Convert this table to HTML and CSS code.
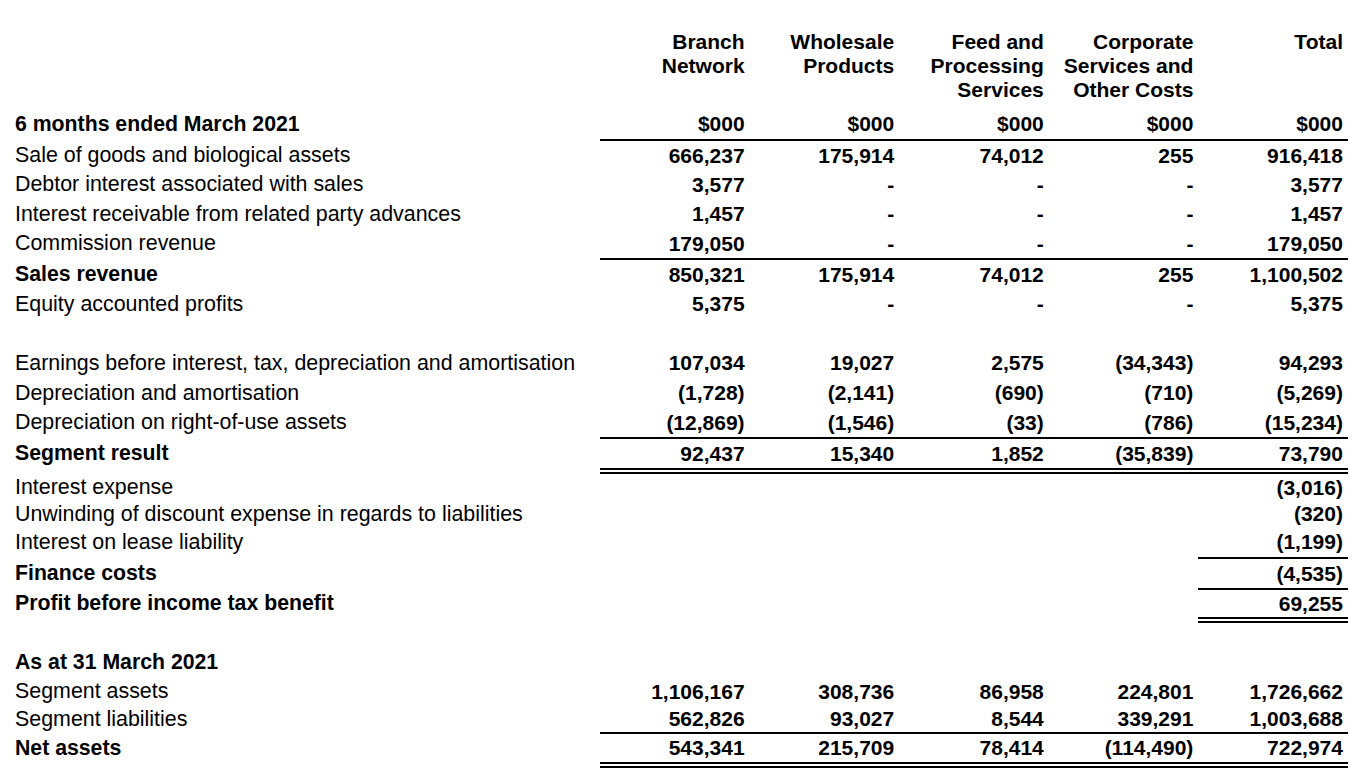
FILE: index.html
```html
<!DOCTYPE html>
<html lang="en">
<head>
<meta charset="utf-8">
<title>Segment information</title>
<link rel="stylesheet" href="styles.css">
</head>
<body>
<main class="statement">
  <div class="row head">
    <div class="label"></div>
    <div class="val">Branch<br>Network</div>
    <div class="val">Wholesale<br>Products</div>
    <div class="val">Feed and<br>Processing<br>Services</div>
    <div class="val">Corporate<br>Services and<br>Other Costs</div>
    <div class="val">Total</div>
  </div>

  <div class="row h30 u">
    <div class="label b">6 months ended March 2021</div>
    <div class="val">$000</div><div class="val">$000</div><div class="val">$000</div><div class="val">$000</div><div class="val">$000</div>
  </div>
  <div class="row h29">
    <div class="label">Sale of goods and biological assets</div>
    <div class="val">666,237</div><div class="val">175,914</div><div class="val">74,012</div><div class="val">255</div><div class="val">916,418</div>
  </div>
  <div class="row h29">
    <div class="label">Debtor interest associated with sales</div>
    <div class="val">3,577</div><div class="val">-</div><div class="val">-</div><div class="val">-</div><div class="val">3,577</div>
  </div>
  <div class="row h30">
    <div class="label">Interest receivable from related party advances</div>
    <div class="val">1,457</div><div class="val">-</div><div class="val">-</div><div class="val">-</div><div class="val">1,457</div>
  </div>
  <div class="row h29 u">
    <div class="label">Commission revenue</div>
    <div class="val">179,050</div><div class="val">-</div><div class="val">-</div><div class="val">-</div><div class="val">179,050</div>
  </div>
  <div class="row h29">
    <div class="label b">Sales revenue</div>
    <div class="val">850,321</div><div class="val">175,914</div><div class="val">74,012</div><div class="val">255</div><div class="val">1,100,502</div>
  </div>
  <div class="row h30">
    <div class="label">Equity accounted profits</div>
    <div class="val">5,375</div><div class="val">-</div><div class="val">-</div><div class="val">-</div><div class="val">5,375</div>
  </div>
  <div class="row h29"><div class="label"></div></div>

  <div class="row h30">
    <div class="label">Earnings before interest, tax, depreciation and amortisation</div>
    <div class="val">107,034</div><div class="val">19,027</div><div class="val">2,575</div><div class="val">(34,343)</div><div class="val">94,293</div>
  </div>
  <div class="row h30">
    <div class="label">Depreciation and amortisation</div>
    <div class="val">(1,728)</div><div class="val">(2,141)</div><div class="val">(690)</div><div class="val">(710)</div><div class="val">(5,269)</div>
  </div>
  <div class="row h29 u">
    <div class="label">Depreciation on right-of-use assets</div>
    <div class="val">(12,869)</div><div class="val">(1,546)</div><div class="val">(33)</div><div class="val">(786)</div><div class="val">(15,234)</div>
  </div>
  <div class="row h29 uu">
    <div class="label b">Segment result</div>
    <div class="val">92,437</div><div class="val">15,340</div><div class="val">1,852</div><div class="val">(35,839)</div><div class="val">73,790</div>
  </div>
  <div class="row h27">
    <div class="label">Interest expense</div>
    <div class="val"></div><div class="val"></div><div class="val"></div><div class="val"></div><div class="val">(3,016)</div>
  </div>
  <div class="row h26">
    <div class="label">Unwinding of discount expense in regards to liabilities</div>
    <div class="val"></div><div class="val"></div><div class="val"></div><div class="val"></div><div class="val">(320)</div>
  </div>
  <div class="row h30">
    <div class="label">Interest on lease liability</div>
    <div class="val"></div><div class="val"></div><div class="val"></div><div class="val"></div><div class="val u">(1,199)</div>
  </div>
  <div class="row h29">
    <div class="label b">Finance costs</div>
    <div class="val"></div><div class="val"></div><div class="val"></div><div class="val"></div><div class="val u">(4,535)</div>
  </div>
  <div class="row h27">
    <div class="label b">Profit before income tax benefit</div>
    <div class="val"></div><div class="val"></div><div class="val"></div><div class="val"></div><div class="val uu">69,255</div>
  </div>
  <div class="row h24"><div class="label"></div></div>

  <div class="row h30">
    <div class="label b">As at 31 March 2021</div>
  </div>
  <div class="row h29">
    <div class="label">Segment assets</div>
    <div class="val">1,106,167</div><div class="val">308,736</div><div class="val">86,958</div><div class="val">224,801</div><div class="val">1,726,662</div>
  </div>
  <div class="row h26 u">
    <div class="label">Segment liabilities</div>
    <div class="val">562,826</div><div class="val">93,027</div><div class="val">8,544</div><div class="val">339,291</div><div class="val">1,003,688</div>
  </div>
  <div class="row h28 uu">
    <div class="label b">Net assets</div>
    <div class="val">543,341</div><div class="val">215,709</div><div class="val">78,414</div><div class="val">(114,490)</div><div class="val">722,974</div>
  </div>
</main>
</body>
</html>
```

FILE: styles.css
```css
html, body {
  margin: 0;
  padding: 0;
  background: #ffffff;
}

body {
  font-family: "Liberation Sans", Arial, sans-serif;
  font-size: 21px;
  color: #000000;
}

.statement {
  padding: 30px 0 0 15px;
}

.row {
  display: grid;
  grid-template-columns: 585px repeat(5, 149.6px);
  align-items: start;
  --h: 30px;
}

.row > div {
  height: var(--h);
  line-height: var(--h);
  white-space: nowrap;
}

.h24 { --h: 24px; }
.h26 { --h: 26px; }
.h27 { --h: 27px; }
.h28 { --h: 28px; }
.h29 { --h: 29px; }
.h30 { --h: 30px; }

.head {
  margin-bottom: 7px;
}

.head > div {
  height: 72px;
  line-height: 24px;
}

.label {
  text-align: left;
  font-size: 21.4px;
}

.label.b {
  font-size: 21.25px;
}

.b {
  font-weight: 700;
}

.val {
  text-align: right;
  padding-right: 5px;
  font-weight: 700;
}

.row.u > .val,
.val.u {
  border-bottom: 2px solid #000000;
}

.row.uu > .val,
.val.uu {
  border-bottom: 6px double #000000;
}
```
